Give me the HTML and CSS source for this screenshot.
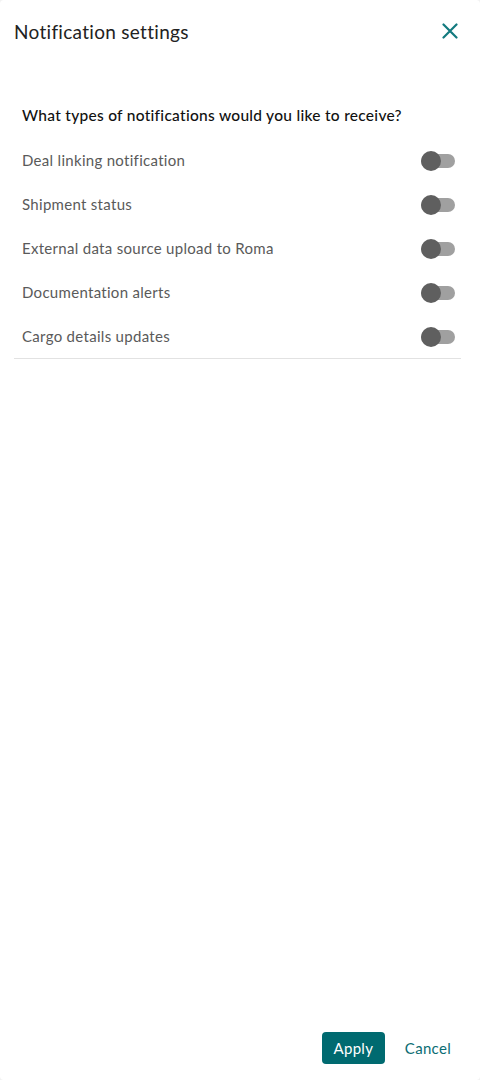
FILE: index.html
```html
<!DOCTYPE html>
<html lang="en">
<head>
    <meta charset="UTF-8">
    <meta name="viewport" content="width=device-width, initial-scale=1.0">
    <title>Notification settings</title>
    <link rel="stylesheet" href="styles.css">
</head>
<body>
    <div class="panel">
        <div class="header">
            <div class="title">Notification settings</div>
            <button class="close-btn" aria-label="Close">
                <svg width="16" height="16" viewBox="0 0 16 16">
                    <path d="M1.5 1.5 L14.5 14.5 M14.5 1.5 L1.5 14.5" stroke="#137a7f" stroke-width="2.2" stroke-linecap="round"/>
                </svg>
            </button>
        </div>

        <div class="content">
            <div class="question">What types of notifications would you like to receive?</div>
            <div class="list">
                <div class="row">
                    <span class="label">Deal linking notification</span>
                    <span class="toggle"><span class="thumb"></span></span>
                </div>
                <div class="row">
                    <span class="label">Shipment status</span>
                    <span class="toggle"><span class="thumb"></span></span>
                </div>
                <div class="row">
                    <span class="label">External data source upload to Roma</span>
                    <span class="toggle"><span class="thumb"></span></span>
                </div>
                <div class="row">
                    <span class="label">Documentation alerts</span>
                    <span class="toggle"><span class="thumb"></span></span>
                </div>
                <div class="row">
                    <span class="label">Cargo details updates</span>
                    <span class="toggle"><span class="thumb"></span></span>
                </div>
            </div>
        </div>

        <div class="footer">
            <button class="apply-btn">Apply</button>
            <button class="cancel-btn">Cancel</button>
        </div>
    </div>
</body>
</html>
```

FILE: styles.css
```css
* {
    box-sizing: border-box;
}

body {
    margin: 0;
    padding: 0;
    background-color: #f2f2f2;
    font-family: Lato, "Noto Sans", sans-serif;
}

.panel {
    display: flex;
    flex-direction: column;
    height: 1080px;
    background-color: white;
    border-radius: 4px;
}

.header {
    display: flex;
    align-items: center;
    justify-content: space-between;
    height: 62px;
    padding: 0 22px 0 14px;
}

.title {
    font-size: 19px;
    letter-spacing: 0.3px;
    color: #222;
}

.close-btn {
    display: flex;
    padding: 0;
    border: none;
    background: none;
    cursor: pointer;
}

.content {
    flex: 1;
    padding: 42px 19px 0 14px;
}

.question {
    height: 22px;
    line-height: 22px;
    padding-left: 8px;
    margin-bottom: 12px;
    font-size: 15.5px;
    font-weight: 500;
    letter-spacing: 0.28px;
    color: #111;
}

.list {
    border-bottom: 1px solid #e2e2e2;
}

.row {
    display: flex;
    align-items: center;
    justify-content: space-between;
    height: 44px;
    padding: 0 6px 0 8px;
}

.label {
    font-size: 15px;
    letter-spacing: 0.3px;
    color: #5a5a5a;
}

.toggle {
    position: relative;
    width: 34px;
    height: 14px;
    margin-top: 1px;
    border-radius: 7px;
    background-color: #a0a0a0;
}

.thumb {
    position: absolute;
    left: 0;
    top: -3px;
    width: 20px;
    height: 20px;
    border-radius: 50%;
    background-color: #5f5f5f;
}

.footer {
    display: flex;
    justify-content: flex-end;
    align-items: center;
    gap: 8px;
    padding: 0 17px 16px 0;
}

.apply-btn {
    width: 63px;
    height: 32px;
    border: none;
    border-radius: 4px;
    background-color: #006a70;
    color: white;
    font-family: inherit;
    font-size: 15px;
    letter-spacing: 0.3px;
    cursor: pointer;
}

.cancel-btn {
    height: 32px;
    padding: 0 12px;
    border: none;
    background: none;
    color: #0b6d73;
    font-family: inherit;
    font-size: 15px;
    letter-spacing: 0.3px;
    cursor: pointer;
}
```
